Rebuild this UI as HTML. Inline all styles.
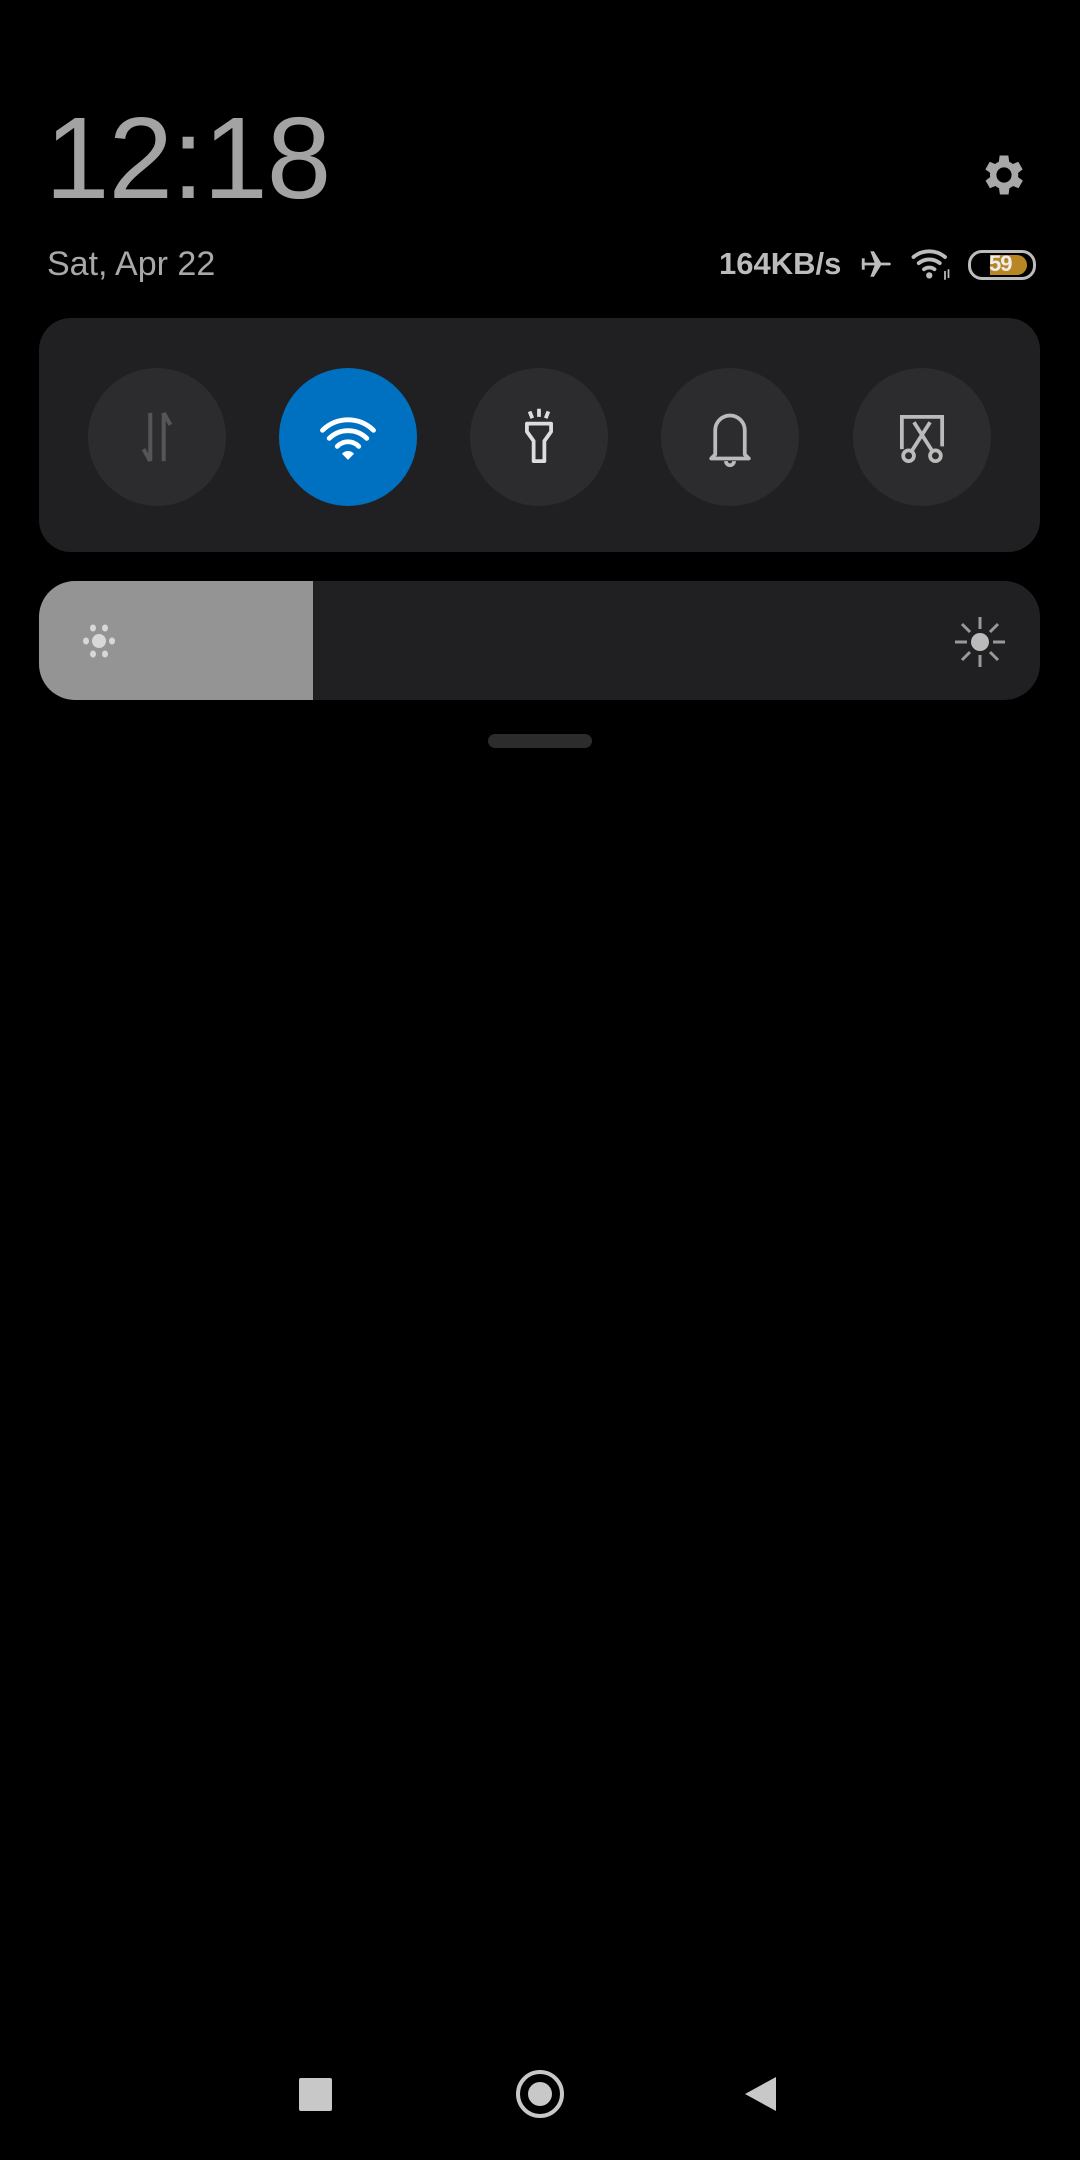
<!DOCTYPE html>
<html><head><meta charset="utf-8"><style>
html,body{margin:0;padding:0;background:#000;}
body{width:1080px;height:2160px;position:relative;overflow:hidden;font-family:"Liberation Sans",sans-serif;}
.abs{position:absolute;}
.clock{left:45px;top:100px;font-size:116px;color:#a3a3a3;letter-spacing:-1px;line-height:1;}
.date{left:47px;top:245px;font-size:34px;color:#a8a8a8;}
.speed{left:719px;top:246px;font-size:31px;font-weight:bold;color:#bcbcbc;}
.panel{left:39px;top:318px;width:1001px;height:234px;background:#202022;border-radius:32px;}
.btn{width:138px;height:138px;border-radius:50%;background:#2c2c2e;top:368px;}
.btn svg{position:absolute;left:22px;top:22px;}
.bright{left:39px;top:581px;width:1001px;height:119px;background:#202022;border-radius:36px;overflow:hidden;}
.fill{left:0;top:0;width:274px;height:119px;background:#949494;}
.handle{left:488px;top:734px;width:104px;height:14px;border-radius:7px;background:#2c2c2c;}
</style></head><body>
<div class="abs clock">12:18</div>
<div class="abs date">Sat, Apr 22</div>
<svg class="abs" style="left:978px;top:149px" width="52" height="52" viewBox="0 0 24 24"><path fill="#a8a8a8" d="M19.4 13a7.5 7.5 0 0 0 0-2l2.1-1.6-2-3.5-2.5 1a7.3 7.3 0 0 0-1.7-1L14.9 3h-4l-.4 2.9a7.3 7.3 0 0 0-1.7 1l-2.5-1-2 3.5L6.5 11a7.5 7.5 0 0 0 0 2l-2.1 1.6 2 3.5 2.5-1a7.3 7.3 0 0 0 1.7 1l.4 2.9h4l.4-2.9a7.3 7.3 0 0 0 1.7-1l2.5 1 2-3.5zM12.9 15.5a3.5 3.5 0 1 1 0-7 3.5 3.5 0 0 1 0 7z" transform="translate(-0.9 0)"/></svg>
<div class="abs speed">164KB/s</div>
<svg class="abs" style="left:858px;top:247px" width="36" height="34" viewBox="0 0 24 24"><path fill="#bcbcbc" d="M2 11h9l-3-8h2.5l5 8H21a1.5 1 0 0 1 0 2h-5.5l-5 8H8l3-8H2z"/><rect x="2" y="8" width="2" height="8" fill="#bcbcbc"/></svg>
<svg class="abs" style="left:910px;top:246px" width="42" height="36" viewBox="0 0 24 20"><g fill="none" stroke="#bcbcbc" stroke-width="2.2" stroke-linecap="round"><path d="M2 6a14 14 0 0 1 18 0"/><path d="M5 9.5a9.5 9.5 0 0 1 12 0"/><path d="M8 13a5 5 0 0 1 6 0"/></g><circle cx="11" cy="16.5" r="1.8" fill="#bcbcbc"/><path d="M20 14v5M22 13v5" stroke="#bcbcbc" stroke-width="1"/></svg>
<div class="abs" style="left:968px;top:250px;width:62px;height:24px;border:3px solid #bcbcbc;border-radius:14px;"></div>
<div class="abs" style="left:990px;top:255px;width:37px;height:20px;background:#b98624;border-radius:0 10px 10px 0;"></div>
<div class="abs" style="left:989px;top:251px;font-size:22px;font-weight:bold;color:#eee;letter-spacing:-1px;">59</div>

<div class="abs panel"></div>
<div class="abs btn" style="left:88px"><svg width="94" height="94" viewBox="0 0 70 70"><g fill="none" stroke="#555" stroke-width="3"><path d="M30 17v36M30 53l-5-9"/><path d="M40 53V17M40 17l5 9"/></g></svg></div>
<div class="abs btn" style="left:279px;background:#0070c0"><svg width="94" height="94" viewBox="0 0 70 70"><g fill="none" stroke="#fff" stroke-width="3.6" stroke-linecap="round"><path d="M16 30a27 27 0 0 1 38 0"/><path d="M21 36a20 20 0 0 1 28 0"/><path d="M27 42a11 11 0 0 1 16 0"/></g><path d="M35 52l-4.5-4.5a6 6 0 0 1 9 0z" fill="#fff"/></svg></div>
<div class="abs btn" style="left:470px"><svg width="94" height="94" viewBox="0 0 70 70"><g fill="none" stroke="#ddd" stroke-width="2.8" stroke-linejoin="round"><path d="M26 25h18v6l-5 7v15h-8V38l-5-7z"/><path d="M28 16l2 5M35 14v6M42 16l-2 5"/></g></svg></div>
<div class="abs btn" style="left:661px"><svg width="94" height="94" viewBox="0 0 70 70"><g fill="none" stroke="#bbb" stroke-width="2.8" stroke-linejoin="round"><path d="M24 48V30a11 11 0 0 1 22 0v18l3 3H21z"/><path d="M32 53a3 3 0 0 0 6 0"/></g></svg></div>
<div class="abs btn" style="left:853px"><svg width="94" height="94" viewBox="0 0 70 70"><g fill="none" stroke="#bbb" stroke-width="2.8"><path d="M20 44V20h30v22"/><path d="M29 24l14 22M41 24L27 46"/><circle cx="25" cy="49" r="4"/><circle cx="45" cy="49" r="4"/></g></svg></div>

<div class="abs bright"><div class="abs fill"></div></div>
<svg class="abs" style="left:74px;top:616px" width="50" height="50" viewBox="0 0 50 50"><g fill="#d8d8d8"><circle cx="25" cy="25" r="7"/><ellipse cx="19" cy="12" rx="3" ry="3.5"/><ellipse cx="31" cy="12" rx="3" ry="3.5"/><ellipse cx="19" cy="38" rx="3" ry="3.5"/><ellipse cx="31" cy="38" rx="3" ry="3.5"/><ellipse cx="12" cy="25" rx="3" ry="3.5"/><ellipse cx="38" cy="25" rx="3" ry="3.5"/></g></svg>
<svg class="abs" style="left:950px;top:612px" width="60" height="60" viewBox="0 0 60 60"><circle cx="30" cy="30" r="9" fill="#bbb"/><g stroke="#999" stroke-width="3"><path d="M30 5v12M30 43v12M5 30h12M43 30h12M12 12l8 8M40 40l8 8M48 12l-8 8M12 48l8-8"/></g></svg>
<div class="abs handle"></div>

<div class="abs" style="left:299px;top:2078px;width:33px;height:33px;background:#c8c8c8;border-radius:2px;"></div>
<div class="abs" style="left:516px;top:2070px;width:40px;height:40px;border:4px solid #c8c8c8;border-radius:50%;"></div>
<div class="abs" style="left:528px;top:2082px;width:24px;height:24px;background:#c8c8c8;border-radius:50%;"></div>
<svg class="abs" style="left:742px;top:2075px" width="36" height="38" viewBox="0 0 36 38"><path d="M34 2v34L3 19z" fill="#c8c8c8"/></svg>
</body></html>
